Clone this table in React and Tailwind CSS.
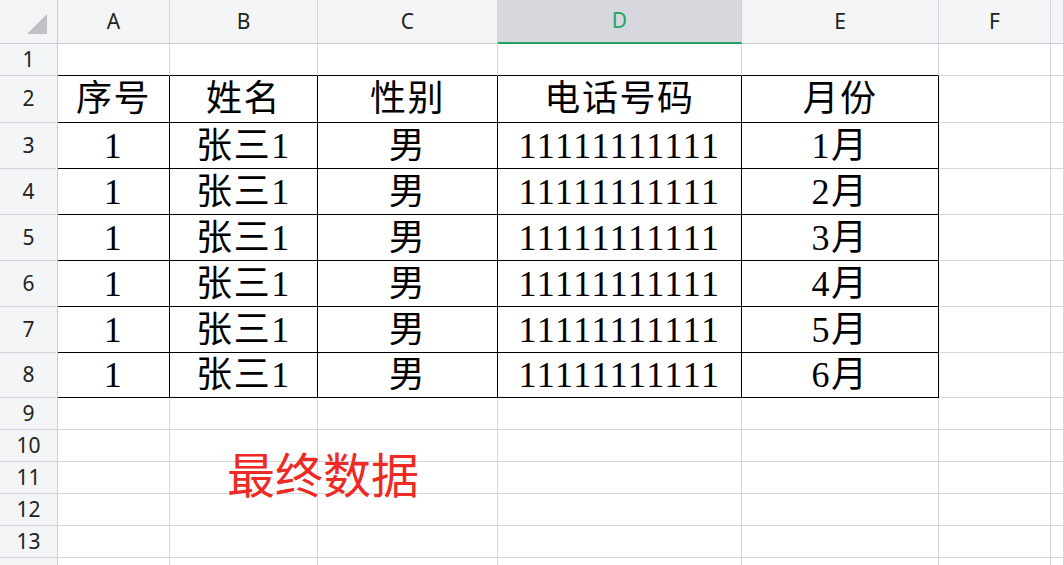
const cols = [
  { key: "A", w: "w-[112px]" },
  { key: "B", w: "w-[148px]" },
  { key: "C", w: "w-[180px]" },
  { key: "D", w: "w-[244px]" },
  { key: "E", w: "w-[197px]" },
  { key: "F", w: "w-[112px]" },
  { key: "G", w: "flex-1" },
];

const rowHeights = {
  1: "h-[32px]",
  2: "h-[47px]",
  3: "h-[46px]",
  4: "h-[46px]",
  5: "h-[46px]",
  6: "h-[46px]",
  7: "h-[46px]",
  8: "h-[45px]",
  9: "h-[32px]",
  10: "h-[32px]",
  11: "h-[32px]",
  12: "h-[32px]",
  13: "h-[32px]",
  14: "h-[32px]",
};

const header = ["序号", "姓名", "性别", "电话号码", "月份"];
const data = [1, 2, 3, 4, 5, 6].map((m) => ["1", "张三1", "男", "11111111111", `${m}月`]);

const cellFont = {
  fontFamily: '"Liberation Serif", "Noto Sans CJK SC", serif',
};

function Cell({ row, ci, col }) {
  const inTable = row >= 2 && row <= 8 && ci <= 4;
  const aboveTable = row === 1 && ci <= 4;
  const bottom = inTable || aboveTable ? "border-b-black" : "border-b-[#d4d6dc]";
  const right = inTable ? "border-r-black" : "border-r-[#d4d6dc]";
  let text = "";
  if (row === 2 && ci <= 4) text = header[ci];
  if (row >= 3 && row <= 8 && ci <= 4) text = data[row - 3][ci];
  return (
    <div
      className={`${col.w} shrink-0 h-full border-r border-b ${bottom} ${right} flex items-center justify-center text-[36px] tracking-[1.6px] leading-none text-black`}
      style={cellFont}
    >
      {text}
    </div>
  );
}

export default function App() {
  return (
    <div
      className="relative w-[1064px] h-[565px] overflow-hidden bg-white"
      style={{ fontFamily: '"Noto Sans", "Noto Sans CJK SC", sans-serif' }}
    >
      {/* column headers */}
      <div className="flex h-[44px]">
        <div className="w-[58px] shrink-0 h-full bg-[#f4f5f7] border-r border-b border-[#c9ccd3] flex items-end justify-end pr-[10px] pb-[9px]">
          <svg width="20" height="20" viewBox="0 0 20 20">
            <polygon points="20,0 20,20 0,20" fill="#bfc1c6" />
          </svg>
        </div>
        {cols.map((c) =>
          c.key === "D" ? (
            <div
              key={c.key}
              className={`${c.w} shrink-0 h-full bg-[#d6d8de] border-r border-r-[#c9ccd3] border-b-2 border-b-[#21a366] flex items-center justify-center text-[21px] text-[#21a366]`}
            >
              D
            </div>
          ) : (
            <div
              key={c.key}
              className={`${c.w} shrink-0 h-full bg-[#f4f5f7] border-r border-b border-[#d4d6dc] border-b-[#c9ccd3] flex items-center justify-center text-[21px] text-[#222]`}
            >
              {c.key === "G" ? "" : c.key}
            </div>
          )
        )}
      </div>

      {Object.keys(rowHeights).map((r) => {
        const row = Number(r);
        return (
          <div key={row} className={`flex ${rowHeights[row]}`}>
            <div className="w-[58px] shrink-0 h-full bg-[#f4f5f7] border-r border-b border-[#d4d6dc] border-r-[#c9ccd3] flex items-center justify-center text-[21px] text-[#222]">
              {row <= 13 ? row : ""}
            </div>
            {cols.map((c, ci) => (
              <Cell key={c.key} row={row} ci={ci} col={c} />
            ))}
          </div>
        );
      })}

      {/* floating text box */}
      <div
        className="absolute left-[227px] top-[448px] text-[48px] leading-none text-[#ee2a24]"
        style={{ fontFamily: '"Noto Sans CJK SC", sans-serif' }}
      >
        最终数据
      </div>
    </div>
  );
}
